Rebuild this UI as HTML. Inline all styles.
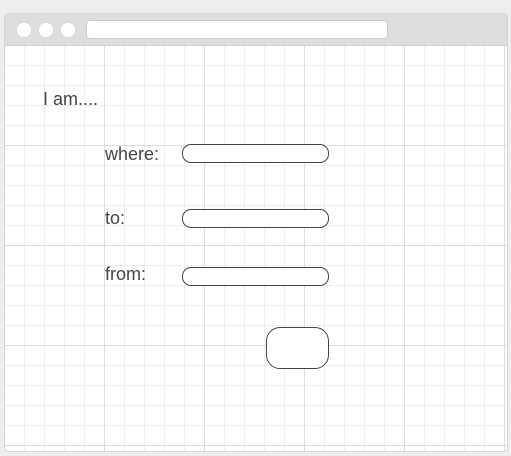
<!DOCTYPE html><html><head><style>
body{margin:0;width:511px;height:456px;background:#eee;position:relative;overflow:hidden;font-family:"Liberation Sans",sans-serif;color:#444}
.win{position:absolute;left:4px;top:13px;width:502px;height:437px;border:1px solid #d4d4d4;border-radius:4px;background:#fff;overflow:hidden}
.bar{position:absolute;left:0;top:0;right:0;height:31px;background:#ddd;border-bottom:1px solid #d0d0d0}
.c{position:absolute;top:9px;width:14px;height:14px;border-radius:50%;background:#fff}
.addr{position:absolute;left:81px;top:6px;width:302px;height:19px;background:#fff;border-radius:4px;border:1px solid #ccc;box-sizing:border-box}
.grid{position:absolute;left:0;top:32px;right:0;bottom:0;
background-image:linear-gradient(#ddd 1px,transparent 1px),linear-gradient(90deg,#ddd 1px,transparent 1px),linear-gradient(#eee 1px,transparent 1px),linear-gradient(90deg,#eee 1px,transparent 1px);
background-size:100px 100px,100px 100px,20px 20px,20px 20px;background-position:-1px -1px}
.t{position:absolute;font-size:18px;line-height:20px}
.in{position:absolute;left:182px;width:147px;border:1px solid #444;border-radius:9px;box-sizing:border-box;height:19px;background:#fff}
</style></head><body>
<div class="win"><div class="bar"><div class="c" style="left:12px"></div><div class="c" style="left:34px"></div><div class="c" style="left:56px"></div><div class="addr"></div></div>
<div class="grid"></div></div>
<div class="t" style="left:43px;top:89px">I am....</div>
<div class="t" style="left:105px;top:144px">where:</div>
<div class="t" style="left:105px;top:208px">to:</div>
<div class="t" style="left:105px;top:264px">from:</div>
<div class="in" style="top:144px"></div>
<div class="in" style="top:209px"></div>
<div class="in" style="top:267px"></div>
<div style="position:absolute;left:266px;top:327px;width:63px;height:42px;border:1px solid #444;border-radius:14px;box-sizing:border-box;background:#fff"></div>
</body></html>
